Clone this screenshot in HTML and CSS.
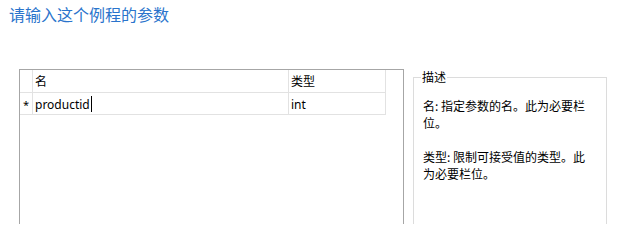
FILE: index.html
```html
<!DOCTYPE html>
<html lang="zh-CN">
<head>
<meta charset="utf-8">
<title>参数</title>
<link rel="stylesheet" href="styles.css">
</head>
<body>
<div class="page">
  <h1 class="title">请输入这个例程的参数</h1>
  <div class="main">
    <div class="table">
      <div class="grid">
        <div class="cell rh"></div>
        <div class="cell">名</div>
        <div class="cell">类型</div>
        <div class="cell rh row">*</div>
        <div class="cell row">productid<span class="caret"></span></div>
        <div class="cell row">int</div>
      </div>
    </div>
    <fieldset class="desc">
      <legend>描述</legend>
      <p>名: 指定参数的名。此为必要栏位。</p>
      <p>类型: 限制可接受值的类型。此为必要栏位。</p>
    </fieldset>
  </div>
</div>
</body>
</html>
```
FILE: styles.css
```css
html, body {
  margin: 0;
  padding: 0;
  background: #ffffff;
  height: 224px;
  overflow: hidden;
}
body {
  font-family: "Segoe UI", "Noto Sans", "Noto Sans CJK SC", sans-serif;
  font-size: 12px;
  color: #000000;
}
.page {
  box-sizing: border-box;
  height: 224px;
  overflow: hidden;
  padding: 3px 0 0 9px;
}
.title {
  margin: 0;
  font-family: "Noto Sans CJK SC", sans-serif;
  font-size: 16px;
  font-weight: normal;
  line-height: 22px;
  color: #2a74cc;
}
.main {
  display: flex;
  align-items: flex-start;
  gap: 9px;
  margin: 44px 0 0 10px;
}
.table {
  box-sizing: border-box;
  width: 385px;
  height: 200px;
  border: 1px solid #a6a6a6;
  background: #ffffff;
}
.grid {
  display: grid;
  grid-template-columns: 13px 256px 97px;
  grid-auto-rows: 23px 22px;
}
.cell {
  box-sizing: border-box;
  border-right: 1px solid #e2e2e2;
  border-bottom: 1px solid #e2e2e2;
  padding: 0 0 0 2px;
  display: flex;
  align-items: center;
  font-family: "Segoe UI", "Noto Sans", "Noto Sans CJK SC", sans-serif;
  font-size: 12px;
  white-space: nowrap;
}
.cell.rh {
  padding: 0;
  justify-content: center;
  font-size: 11px;
}
.cell.row {
  padding-top: 1px;
}
.caret {
  display: inline-block;
  width: 0;
  height: 16px;
  border-left: 1px solid #000000;
  margin-left: 1px;
}
.desc {
  box-sizing: border-box;
  width: 194px;
  height: 200px;
  margin: 0;
  padding: 12px 10px 0 9px;
  border: 1px solid #dcdcdc;
  min-width: 0;
}
.desc legend {
  padding: 0 1px;
  margin-left: -2px;
  font-family: "Noto Sans CJK SC", sans-serif;
  font-size: 12px;
  line-height: 16px;
}
.desc p {
  margin: 0 0 17px 0;
  font-family: "Noto Sans CJK SC", sans-serif;
  font-size: 12px;
  line-height: 17px;
}
```
